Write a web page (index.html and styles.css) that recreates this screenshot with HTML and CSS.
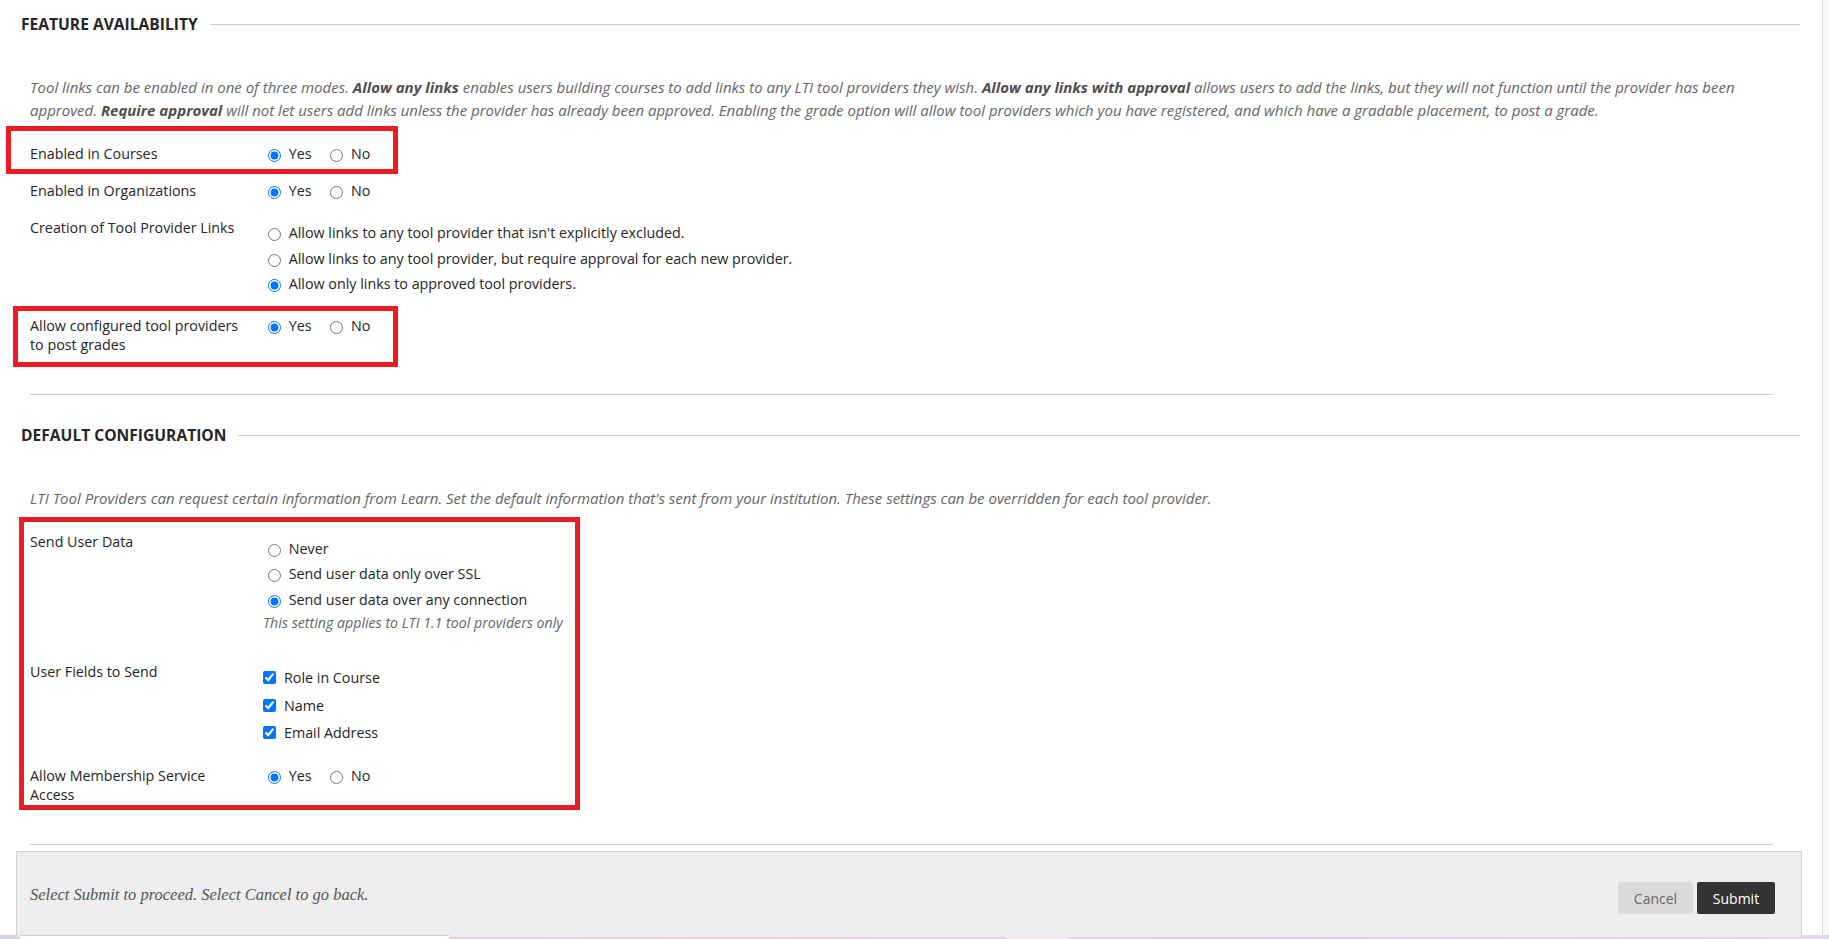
FILE: index.html
```html
<!DOCTYPE html>
<html>
  <head>
    <title>LTI Tool Providers - Global Properties</title>
    <link rel="stylesheet" href="styles.css">
  </head>
  <body>
    <div class="page">
      <div class="content">
        <!-- Feature Availability -->
        <section class="step">
          <h2 class="step-title"><span>FEATURE AVAILABILITY</span></h2>
          <p class="step-instructions">
            Tool links can be enabled in one of three modes. <strong>Allow any links</strong> enables users building courses to add links to any LTI tool providers they wish. <strong>Allow any links with approval</strong> allows users to add the links, but they will not function until the provider has been approved. <strong>Require approval</strong> will not let users add links unless the provider has already been approved. Enabling the grade option will allow tool providers which you have registered, and which have a gradable placement, to post a grade.
          </p>

          <div class="field-row">
            <div class="field-label">Enabled in Courses</div>
            <div class="field">
              <label class="inline"><input type="radio" name="courses" checked> Yes</label>
              <label class="inline"><input type="radio" name="courses"> No</label>
            </div>
          </div>

          <div class="field-row">
            <div class="field-label">Enabled in Organizations</div>
            <div class="field">
              <label class="inline"><input type="radio" name="orgs" checked> Yes</label>
              <label class="inline"><input type="radio" name="orgs"> No</label>
            </div>
          </div>

          <div class="field-row">
            <div class="field-label">Creation of Tool Provider Links</div>
            <div class="field option-list">
              <label class="option"><input type="radio" name="links"> Allow links to any tool provider that isn't explicitly excluded.</label>
              <label class="option"><input type="radio" name="links"> Allow links to any tool provider, but require approval for each new provider.</label>
              <label class="option"><input type="radio" name="links" checked> Allow only links to approved tool providers.</label>
            </div>
          </div>

          <div class="field-row">
            <div class="field-label">Allow configured tool providers to post grades</div>
            <div class="field">
              <label class="inline"><input type="radio" name="grades" checked> Yes</label>
              <label class="inline"><input type="radio" name="grades"> No</label>
            </div>
          </div>
        </section>

        <hr class="step-divider">

        <!-- Default Configuration -->
        <section class="step">
          <h2 class="step-title"><span>DEFAULT CONFIGURATION</span></h2>
          <p class="step-instructions">
            LTI Tool Providers can request certain information from Learn. Set the default information that's sent from your institution. These settings can be overridden for each tool provider.
          </p>

          <div class="field-row">
            <div class="field-label">Send User Data</div>
            <div class="field option-list lower">
              <label class="option"><input type="radio" name="userdata"> Never</label>
              <label class="option"><input type="radio" name="userdata"> Send user data only over SSL</label>
              <label class="option"><input type="radio" name="userdata" checked> Send user data over any connection</label>
              <div class="field-help">This setting applies to LTI 1.1 tool providers only</div>
            </div>
          </div>

          <div class="field-row">
            <div class="field-label">User Fields to Send</div>
            <div class="field check-list">
              <label class="check"><input type="checkbox" checked> Role in Course</label>
              <label class="check"><input type="checkbox" checked> Name</label>
              <label class="check"><input type="checkbox" checked> Email Address</label>
            </div>
          </div>

          <div class="field-row spaced">
            <div class="field-label">Allow Membership Service Access</div>
            <div class="field">
              <label class="inline"><input type="radio" name="membership" checked> Yes</label>
              <label class="inline"><input type="radio" name="membership"> No</label>
            </div>
          </div>
        </section>

        <hr class="step-divider">

        <div class="submit-bar">
          <p class="submit-text">Select Submit to proceed. Select Cancel to go back.</p>
          <div class="submit-buttons">
            <button class="button-cancel">Cancel</button>
            <button class="button-submit">Submit</button>
          </div>
        </div>
      </div>
      <div class="scroll-track"></div>
    </div>

    <div class="desktop-strip">
      <div class="strip-window"></div>
      <div class="strip-gap"></div>
      <div class="strip-tab"></div>
      <div class="strip-rest"></div>
    </div>

    <!-- highlight boxes drawn over the form -->
    <div class="highlight box-courses"></div>
    <div class="highlight box-grades"></div>
    <div class="highlight box-defaults"></div>
  </body>
</html>
```

FILE: styles.css
```css
body {
  margin: 0;
  font-family: "Open Sans", "Liberation Sans", sans-serif;
  font-size: 14.3px;
  color: #262626;
  background: #ffffff;
  height: 939px;
  overflow: hidden;
  position: relative;
}

.page {
  display: flex;
  height: 935px;
}

.content {
  flex: 1;
  padding: 14px 22px 0 21px;
}

.scroll-track {
  width: 6px;
  border-left: 1px solid #dcdcdc;
  background-color: #f7f7f7;
}

/* Step headings */
.step-title {
  display: flex;
  align-items: center;
  gap: 12px;
  margin: 0;
  font-size: 15.6px;
  font-weight: 700;
  line-height: 20px;
  color: #262626;
}

.step-title::after {
  content: "";
  flex: 1;
  height: 1px;
  background-color: #cdcdcd;
}

.step-instructions {
  margin: 42px 0 13px 9px;
  font-size: 15px;
  font-style: italic;
  line-height: 23px;
  color: #666666;
}

.step-instructions strong {
  color: #4f4f4f;
}

.step-divider {
  margin: 31px 27px 30.5px 9px;
  border: none;
  border-top: 1px solid #cdcdcd;
}

/* Form rows */
.field-row {
  display: flex;
  padding: 9px 0 9px 9px;
  line-height: 19px;
}

.field-row.spaced {
  padding-top: 10.5px;
}

.field-label {
  width: 233px;
  flex-shrink: 0;
  padding-right: 16px;
  box-sizing: border-box;
}

.field {
  flex: 1;
}

.inline {
  margin-right: 10px;
}

.inline input,
.option input {
  margin: 0 4px 0 5px;
  vertical-align: -3px;
}

.option-list {
  padding: 2px 0 1px;
}

.option-list.lower {
  padding-top: 3.5px;
}

.option {
  display: block;
  line-height: 25.5px;
}

.field-help {
  margin: 1px 0 9.5px;
  font-size: 14.2px;
  font-style: italic;
  line-height: 20px;
  color: #666666;
}

.check-list {
  padding-top: 2.5px;
}

.check {
  display: flex;
  align-items: center;
  height: 27.5px;
}

.check input {
  margin: 0 8px 0 0;
  width: 13px;
  height: 13px;
}

/* Submit bar */
.submit-bar {
  display: flex;
  align-items: center;
  justify-content: space-between;
  margin: -25px -2px 0 -5px;
  height: 86px;
  padding: 2px 26px 0 13px;
  background-color: #eeeeee;
  border: 1px solid #d2d2d2;
  border-bottom: none;
  box-sizing: border-box;
}

.submit-text {
  margin: 0;
  font-family: "Liberation Serif", "DejaVu Serif", serif;
  font-style: italic;
  font-size: 16.5px;
  color: #555555;
}

.submit-buttons {
  display: flex;
  gap: 4px;
  margin-top: 6px;
}

.submit-buttons button {
  height: 32px;
  padding: 0 12px;
  border: none;
  border-radius: 2px;
  font-family: "Open Sans", "Liberation Sans", sans-serif;
  font-size: 14px;
}

.button-cancel {
  width: 75px;
  background-color: #dadada;
  color: #666666;
}

.button-submit {
  width: 78px;
  background-color: #333333;
  color: #ffffff;
}

/* Bottom edge of the desktop below the window */
.desktop-strip {
  display: flex;
  height: 4px;
  background: linear-gradient(90deg, #d8cfe4, #e6d3e0 40%, #ddd0e4 70%, #e3d6e8);
}

.strip-window {
  width: 429px;
  margin-left: 20px;
  background-color: #ffffff;
  border-top: 1px solid #cccccc;
}

.strip-gap {
  width: 558px;
}

.strip-tab {
  width: 61px;
  background-color: #f1e7f1;
}

/* Red annotation boxes */
.highlight {
  position: absolute;
  border: 5px solid #ec1c24;
  box-sizing: border-box;
}

.box-courses {
  left: 6px;
  top: 126px;
  width: 392px;
  height: 48px;
}

.box-grades {
  left: 13px;
  top: 306px;
  width: 385px;
  height: 61px;
}

.box-defaults {
  left: 19px;
  top: 517px;
  width: 561px;
  height: 293px;
}
```
